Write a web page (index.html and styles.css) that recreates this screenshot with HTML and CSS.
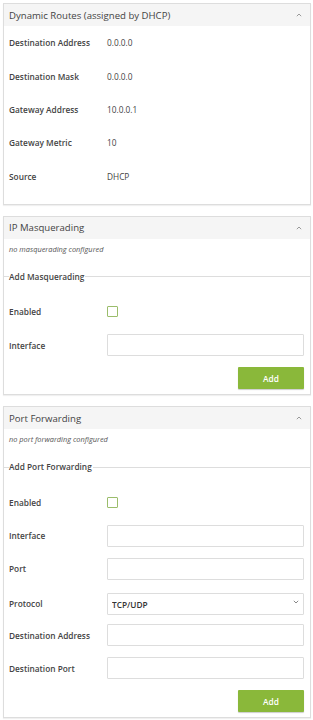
FILE: index.html
```html
<!DOCTYPE html>
<html lang="en">
<head>
    <meta charset="UTF-8">
    <meta name="viewport" content="width=device-width, initial-scale=1.0">
    <title>Routing</title>
    <link rel="stylesheet" href="styles.css">
</head>
<body>
    <div class="panel">
        <div class="panel-header">
            <span class="panel-title">Dynamic Routes (assigned by DHCP)</span>
            <svg class="caret" width="6" height="4" viewBox="0 0 6 4"><path d="M0.8 3.2 L3 1 L5.2 3.2" fill="none" stroke="#999" stroke-width="1"/></svg>
        </div>
        <div class="panel-body info-body">
            <div class="info-row"><span class="label">Destination Address</span><span class="value">0.0.0.0</span></div>
            <div class="info-row"><span class="label">Destination Mask</span><span class="value">0.0.0.0</span></div>
            <div class="info-row"><span class="label">Gateway Address</span><span class="value">10.0.0.1</span></div>
            <div class="info-row"><span class="label">Gateway Metric</span><span class="value">10</span></div>
            <div class="info-row"><span class="label">Source</span><span class="value">DHCP</span></div>
        </div>
    </div>

    <div class="panel">
        <div class="panel-header">
            <span class="panel-title">IP Masquerading</span>
            <svg class="caret" width="6" height="4" viewBox="0 0 6 4"><path d="M0.8 3.2 L3 1 L5.2 3.2" fill="none" stroke="#999" stroke-width="1"/></svg>
        </div>
        <p class="empty-note">no masquerading configured</p>
        <fieldset class="add-form">
            <legend>Add Masquerading</legend>
            <div class="form-row">
                <label class="label" for="masq-enabled">Enabled</label>
                <input type="checkbox" id="masq-enabled" class="check">
            </div>
            <div class="form-row">
                <label class="label" for="masq-if">Interface</label>
                <input type="text" id="masq-if" class="field">
            </div>
            <div class="form-actions">
                <button type="button" class="add-button">Add</button>
            </div>
        </fieldset>
    </div>

    <div class="panel">
        <div class="panel-header">
            <span class="panel-title">Port Forwarding</span>
            <svg class="caret" width="6" height="4" viewBox="0 0 6 4"><path d="M0.8 3.2 L3 1 L5.2 3.2" fill="none" stroke="#999" stroke-width="1"/></svg>
        </div>
        <p class="empty-note">no port forwarding configured</p>
        <fieldset class="add-form">
            <legend>Add Port Forwarding</legend>
            <div class="form-row">
                <label class="label" for="pf-enabled">Enabled</label>
                <input type="checkbox" id="pf-enabled" class="check">
            </div>
            <div class="form-row">
                <label class="label" for="pf-if">Interface</label>
                <input type="text" id="pf-if" class="field">
            </div>
            <div class="form-row">
                <label class="label" for="pf-port">Port</label>
                <input type="text" id="pf-port" class="field">
            </div>
            <div class="form-row">
                <label class="label" for="pf-proto">Protocol</label>
                <div class="select-wrap">
                    <select id="pf-proto" class="field select">
                        <option>TCP/UDP</option>
                        <option>TCP</option>
                        <option>UDP</option>
                    </select>
                    <svg class="select-arrow" width="6" height="4" viewBox="0 0 6 4"><path d="M0.8 0.8 L3 3 L5.2 0.8" fill="none" stroke="#888" stroke-width="1"/></svg>
                </div>
            </div>
            <div class="form-row">
                <label class="label" for="pf-daddr">Destination Address</label>
                <input type="text" id="pf-daddr" class="field">
            </div>
            <div class="form-row">
                <label class="label" for="pf-dport">Destination Port</label>
                <input type="text" id="pf-dport" class="field">
            </div>
            <div class="form-actions">
                <button type="button" class="add-button">Add</button>
            </div>
        </fieldset>
    </div>
</body>
</html>
```

FILE: styles.css
```css
body {
    font-family: 'Open Sans', 'Liberation Sans', sans-serif;
    margin: 0;
    padding: 3px 2px 0 3px;
    background-color: #fff;
    color: #333;
}

.panel {
    border: 1px solid #ddd;
    box-shadow: 0 1px 1px rgba(0, 0, 0, 0.06);
    margin-bottom: 11px;
    background-color: #fff;
}

.panel-header {
    display: flex;
    justify-content: space-between;
    align-items: center;
    height: 22px;
    padding: 0 8px 0 5px;
    background-color: #f5f5f5;
}

.panel-title {
    font-size: 9.6px;
    color: #444;
}

.caret {
    display: block;
}

/* 상세 정보 */
.info-body {
    padding: 0 6px 11px 5px;
}

.info-row {
    display: grid;
    grid-template-columns: 98px 1fr;
    align-items: center;
    height: 33.4px;
}

.label {
    font-size: 8.3px;
    font-weight: 600;
    color: #444;
}

.value {
    font-size: 8.3px;
    color: #444;
}

.empty-note {
    margin: 0;
    padding: 5px 5px 0;
    height: 32px;
    box-sizing: border-box;
    font-size: 7.4px;
    font-style: italic;
    color: #555;
}

/* 추가 폼 */
.add-form {
    margin: 0;
    padding: 0 6px 5px 5px;
    border: none;
    border-top: 1px solid #ddd;
    min-width: 0;
}

.add-form legend {
    padding: 0 1px 0 0;
    margin-left: 0;
    font-size: 8.3px;
    line-height: 12px;
    font-weight: 600;
    color: #444;
}

.form-row {
    display: grid;
    grid-template-columns: 98px 1fr;
    align-items: center;
    height: 22px;
    margin-top: 11.2px;
}

.form-row:first-of-type {
    margin-top: 18px;
}

.check {
    appearance: none;
    margin: 0;
    width: 11px;
    height: 11px;
    border: 1px solid #9bbd6b;
    border-radius: 1px;
    background-color: #fff;
}

.field {
    height: 22px;
    width: 100%;
    box-sizing: border-box;
    margin: 0;
    border: 1px solid #ddd;
    border-radius: 1px;
    background-color: #fff;
    font-family: inherit;
}

.select-wrap {
    position: relative;
}

.select {
    appearance: none;
    padding: 0 4px;
    font-size: 8.3px;
    font-weight: 600;
    color: #333;
}

.select-arrow {
    position: absolute;
    right: 5px;
    top: 9px;
}

.form-actions {
    display: flex;
    justify-content: flex-end;
    margin-top: 11.2px;
}

.add-button {
    width: 66px;
    height: 22px;
    border: none;
    border-radius: 1px;
    background-color: #8ab83a;
    box-shadow: 0 1px 1px rgba(0, 0, 0, 0.2);
    color: #fff;
    font-family: inherit;
    font-size: 8.3px;
    font-weight: 600;
}
```
